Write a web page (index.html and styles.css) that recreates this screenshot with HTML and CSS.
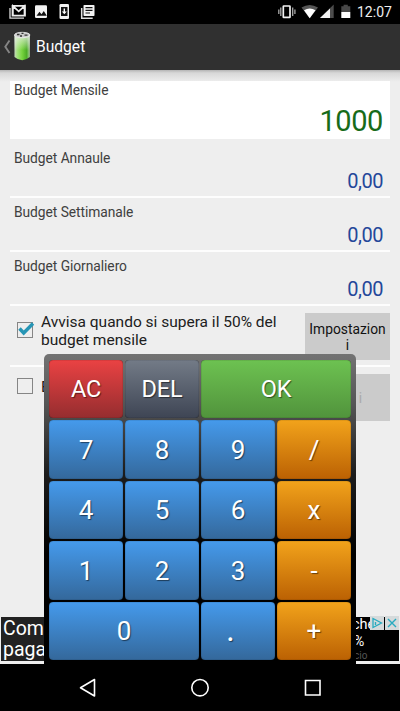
FILE: index.html
```html
<!DOCTYPE html>
<html lang="it">
<head>
<meta charset="utf-8">
<title>Budget</title>
<link rel="stylesheet" href="styles.css">
</head>
<body>
<div class="screen">
  <header class="status">
    <svg class="status-left" width="100" height="24" viewBox="0 0 100 24">
      <path d="M10 8v10.200h14" fill="none" stroke="#ddd" stroke-width="1.300"/>
      <path d="M12.900 15.200V6L18.700 11.300 24.500 6v9.200M12.500 5.800h12.500v9.800H12.500z" fill="none" stroke="#eee" stroke-width="1.700"/>
      <rect x="35" y="5.300" width="12" height="12.700" rx="1.200" fill="#f2f2f2"/>
      <path d="M36.500 15.800l3-4 2 2.400 2.300-3.200 3 4.800z" fill="#111"/>
      <rect x="59.500" y="4" width="9.500" height="15" rx="1.300" fill="#f2f2f2"/>
      <path d="M61 7h6.500v9H61z" fill="#111"/>
      <path d="M63.600 8.500h1.400v3h1.800l-2.500 2.800-2.500-2.800h1.800z" fill="#fff"/>
      <path d="M81.700 8v10.200h11" fill="none" stroke="#ddd" stroke-width="1.500"/>
      <rect x="83.500" y="5" width="11" height="11" rx=".8" fill="#f2f2f2"/>
      <path d="M85.500 7.700h7M85.500 10.300h7M85.500 13h4.500" stroke="#111" stroke-width="1.200"/>
    </svg>
    <div class="status-right">
      <svg width="76" height="24" viewBox="276 0 76 24">
        <rect x="283.300" y="6" width="6.700" height="11.400" rx=".5" fill="none" stroke="#f2f2f2" stroke-width="1.700"/>
        <path d="M280.800 7.500v8.500M292.700 7.500v8.500M278.800 9.500v4.500M294.900 9.500v4.500" stroke="#aaa" stroke-width="1.300"/>
        <path d="M301.500 7.500q8-5.200 16.500 0L309.700 18.300z" fill="#555"/>
        <path d="M304 10.300q5.700-3.500 11.500 0l-5.800 8z" fill="#fff"/>
        <path d="M333.700 4.500V18H320z" fill="#4d4d4d"/>
        <path d="M330 8.500V18h-10z" fill="#f2f2f2"/>
        <path d="M341.300 6.200h2.300V4.700h4.200v1.500h2.500V12h-9z" fill="#484848"/>
        <path d="M341.300 12h9v6h-9z" fill="#fff"/>
      </svg>
      <span class="clock">12:07</span>
    </div>
  </header>
  <div class="appbar">
    <svg width="36" height="46" viewBox="0 24 36 46">
      <defs>
        <linearGradient id="can"><stop offset="0" stop-color="#c2d8b8"/><stop offset=".2" stop-color="#9be070"/><stop offset=".5" stop-color="#6fd034"/><stop offset=".8" stop-color="#43a81b"/><stop offset="1" stop-color="#a9c99b"/></linearGradient>
        <linearGradient id="shine" x2="0" y2="1"><stop offset="0" stop-color="#eee" stop-opacity=".8"/><stop offset=".6" stop-color="#fff" stop-opacity=".05"/></linearGradient>
      </defs>
      <path d="M9.500 40.500L5.300 46.700 9.500 53" fill="none" stroke="#858585" stroke-width="1.900"/>
      <path d="M14.500 35v22q7.800 6.500 15.300 0V35z" fill="url(#can)"/>
      <path d="M14.500 35v22q7.800 6.500 15.300 0V35z" fill="url(#shine)"/>
      <ellipse cx="22.200" cy="35" rx="7.700" ry="2.700" fill="#c9c9c9" stroke="#eee" stroke-width=".8"/>
      <path d="M17 34.500h2.500M21.500 33.300h2M24.500 35.200h3M20 36h2" stroke="#333" stroke-width="1.300"/>
    </svg>
    <h1>Budget</h1>
  </div>
  <main>
    <section class="field active"><label>Budget Mensile</label><output>1000</output></section>
    <section class="field"><label>Budget Annaule</label><output>0,00</output></section>
    <section class="field"><label>Budget Settimanale</label><output>0,00</output></section>
    <section class="field"><label>Budget Giornaliero</label><output>0,00</output></section>
    <section class="alert">
      <span class="box"><svg width="22" height="18" viewBox="0 0 22 18"><path d="M3.500 8.500l4.200 4.500L17 3.500" fill="none" stroke="#2695b5" stroke-width="3.400"/></svg></span>
      <p>Avvisa quando si supera il 50% del budget mensile</p>
      <button>Impostazion<br>i</button>
    </section>
    <section class="alert second">
      <span class="box"></span>
      <p>B</p>
      <button class="off"><br>i</button>
    </section>
    <aside class="ad">
      <div class="ad-left">Com<br>paga</div>
      <div class="ad-right"><span>che</span><span class="pct">%</span><small>cio</small></div>
      <svg class="adchoices" width="29" height="14" viewBox="0 0 29 14">
        <path d="M0 0h14v14H0zM15 0h14v14H15z" fill="#d5dadb"/>
        <path d="M3 2.500l8.500 4.500L3 11.500z" fill="none" stroke="#27abc0" stroke-width="1.300"/>
        <path d="M5.500 6v3M18 3l8 8M26 3l-8 8" stroke="#27abc0" stroke-width="1.400"/>
      </svg>
    </aside>
  </main>
  <div class="keypad">
    <div class="key red">AC</div><div class="key gray">DEL</div><div class="key green wide">OK</div>
    <div class="key">7</div><div class="key">8</div><div class="key">9</div><div class="key orange">/</div>
    <div class="key">4</div><div class="key">5</div><div class="key">6</div><div class="key orange">x</div>
    <div class="key">1</div><div class="key">2</div><div class="key">3</div><div class="key orange">-</div>
    <div class="key wide">0</div><div class="key point">.</div><div class="key orange">+</div>
  </div>
  <nav>
    <svg width="400" height="47" viewBox="0 664 400 47" fill="none" stroke="#fff" stroke-width="1.600">
      <path d="M94.500 679.500v16.500L80.500 687.800z" stroke-linejoin="round"/>
      <circle cx="200" cy="687.700" r="8.200"/>
      <path d="M305.500 680.500h14.500v14.500h-14.500z"/>
    </svg>
  </nav>
</div>
</body>
</html>
```
FILE: styles.css
```css
* { box-sizing: border-box; }
body { margin: 0; font-family: Roboto, sans-serif; background: #000; }
.screen { position: relative; width: 400px; height: 711px; overflow: hidden; display: flex; flex-direction: column; }
svg { display: block; flex: none; }

.status { height: 24px; flex: none; display: flex; justify-content: space-between; background: #000; }
.status-right { display: flex; width: 124px; }
.clock { color: #eee; font-size: 14px; line-height: 25px; margin-left: 5px; }
.appbar { height: 46px; flex: none; display: flex; align-items: center; background: #303030; }
h1 { margin: 0; color: #fff; font-size: 15.6px; font-weight: 400; line-height: 46px; }

main { height: 594px; flex: none; padding: 11px 10px 0; background: linear-gradient(#b5b5b5 0, #d8d8d8 3px, #eee 12px); display: flex; flex-direction: column; }
.field { height: 54px; flex: none; border-bottom: 2px solid #fdfdfd; padding: 6px 7px 0 4px; display: flex; flex-direction: column; color: #404040; }
.field label { font-size: 13.8px; line-height: 16px; letter-spacing: -.05px; }
.field output { align-self: flex-end; font-size: 20px; line-height: 24px; margin-top: 3px; letter-spacing: -.5px; color: #24479a; }
.field.active { height: 58px; background: #fff; border: 0; padding-top: 1px; margin-bottom: 5px; }
.field.active output { font-size: 29px; line-height: 34px; margin-top: 6px; letter-spacing: -.4px; color: #176b1a; }

.alert { height: 61px; flex: none; border-bottom: 2px solid #fdfdfd; display: flex; padding-top: 7px; color: #202020; }
.box { width: 16px; height: 16px; flex: none; border: 1px solid #858585; margin: 9px 7px 0 7px; }
.box svg { margin: -3px 0 0 -2px; }
.alert p { width: 250px; margin: 0; padding-right: 5px; margin-left: 1px; font-size: 15.5px; line-height: 18px; flex: none; }
.alert button { margin: 0 0 0 14px; width: 85px; height: 47px; flex: none; padding: 1px 0 0; border: 0; background: #cbcbcb; color: #111; font: 13.8px/16px Roboto, sans-serif; }
.alert.second { border: 0; }
.second .box { margin-top: 4px; }
.second p { padding-top: 4px; }
.alert.second button { padding: 0 0 16px 26px; color: #aaa; }

.ad { position: relative; margin: auto -10px 0; height: 48px; border: 1px solid #eee; border-bottom-width: 3px; background: #000; color: #fff; display: flex; justify-content: space-between; }
.ad-left { width: 60px; background: #222; padding: 1px 0 0 2px; font-size: 19.5px; line-height: 21px; }
.ad-right { width: 42px; display: flex; flex-direction: column; font-size: 14.5px; line-height: 16px; margin-left: auto; }
.ad-right span:first-child { margin-left: -5px; }
.ad-right .pct { font-size: 14px; line-height: 17px; margin-left: -3px; }
.ad-right small { color: #555; font-size: 10px; line-height: 12px; margin-left: -3px; }
.adchoices { position: absolute; right: 0; top: -1px; }

.keypad { position: absolute; left: 44px; top: 354px; width: 312px; height: 310px; padding: 6px 5px 4px; border-radius: 5px 5px 0 0; background: linear-gradient(#737373 0, #555 50px, #1c1c1c 120px, #000 200px); display: grid; grid-template-columns: repeat(4, 74px); grid-template-rows: repeat(5, 58.400px); gap: 2px; }
.key { display: flex; align-items: center; justify-content: center; border-radius: 4px; color: #fff; font-size: 26px; line-height: 30px; text-shadow: 1px 1px 1px rgba(0,0,0,.5); background: linear-gradient(#459aec, #34689b); box-shadow: inset 0 0 1px rgba(0,0,0,.8); padding-top: 1px; }
.wide { grid-column: span 2; }
.red { background: linear-gradient(#ea4243, #952d2f); }
.gray { background: linear-gradient(#737b87, #3e4554); }
.green { background: linear-gradient(#6dc251, #51933c); }
.orange { background: linear-gradient(#f2a31b, #bb6103); }
.red, .gray, .green { font-size: 23.500px; padding-top: 0; letter-spacing: -.2px; }
.point { padding: 0 15px 4px 0; font-size: 34px; }
nav { height: 47px; flex: none; background: #000; }
```
